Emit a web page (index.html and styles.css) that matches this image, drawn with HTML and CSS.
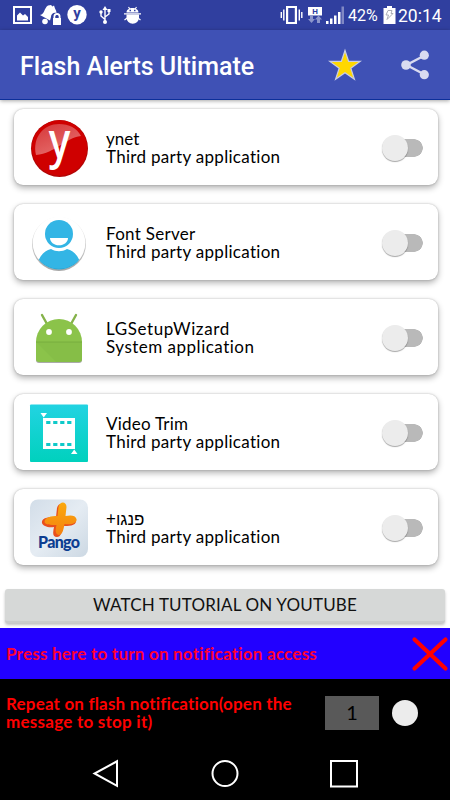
FILE: index.html
```html
<!DOCTYPE html>
<html lang="en">
<head>
    <meta charset="UTF-8">
    <title>Flash Alerts Ultimate</title>

    <link rel="stylesheet" href="styles.css">
</head>

<body>
<div class="phone">
    <div class="status-bar">
        <svg class="notifications" width="150" height="30" viewBox="0 0 150 30" fill="#fff">
            <path fill-rule="evenodd" d="M13 6h19v18H13zM15 8v14h15V8z"/>
            <path d="M17 20.500v-5l3-3 3 3 2-1.500 3 3v3.500z"/>
            <path d="M51 5l1.500 1.500L54 5.500l1 3c1 1.500 1.500 3 1.500 4.500-3-1-5.500 1-5.500 4l-1 3.500-10-5.500c5-1 4-7 8-9.500z"/>
            <circle cx="45" cy="21.500" r="2.800"/>
            <path fill-rule="evenodd" d="M53.500 18v-1.500a3.500 3.500 0 0 1 7 0V18h.5v7h-8v-7zm1.800 0h3.400v-1.500c0-2-3.400-2-3.400 0z"/>
            <circle cx="77" cy="14.700" r="9.700"/>
            <text class="status-y" x="77" y="18" text-anchor="middle">y</text>
            <g fill="none" stroke="#fff" stroke-width="1.400">
                <path d="M105 8v14M105 19.500l-4-3.500v-4M105 17l4-3v-3"/>
            </g>
            <path d="M102.500 10l2.500-4 2.500 4zM107.500 9h3v3h-3z"/>
            <circle cx="101" cy="12" r="1.700"/>
            <circle cx="105" cy="22" r="2"/>
            <path d="M126.500 12.500c0-6 12-6 12 0zM126.500 14.500h12.500v3a6.200 6.200 0 0 1-12.500 0z"/>
            <path d="M128.500 7l2 3M136.500 7l-2 3M124 13.800h17M124.500 20l4-3M140.500 20l-4-3" stroke="#fff" stroke-width="1.200"/>
            <path d="M129.500 10.500h1.500M134 10.500h1.500" stroke="#303f9f" stroke-width="1.300"/>
        </svg>
        <div class="system">
            <svg width="66" height="30" viewBox="0 0 66 30" fill="#fff">
                <path fill-rule="evenodd" d="M7 6h11v18H7zM9.200 8v14h6.600V8z"/>
                <path d="M4.800 9.500v11M20.300 9.500v11M2.300 12v6M22.800 12v6" stroke="#fff" stroke-width="1.400"/>
                <path d="M29 7h14v8.500H29z"/>
                <text class="status-h" x="36" y="14.200" text-anchor="middle">H</text>
                <path fill="#8c95cb" d="M31 15.500h3V19h2l-3.500 4-3.500-4h2zM39.500 15.500l3.500 4h-2V23h-3v-3.500h-2z"/>
                <path d="M47 21h2.500v3H47zM51 18.500h2.500V24H51zM55 15.500h2.500V24H55z"/>
                <path d="M59 12h2.500v12H59z"/>
                <path fill="#8088c4" d="M62.500 6.500H65V24h-2.500z"/>
            </svg>
            <span class="percent">42%</span>
            <svg class="battery" width="13" height="30" viewBox="0 0 13 30">
                <path fill="#fff" d="M.5 8H4V6h5v2h3.500v16H.5z"/>
                <path fill="none" stroke="#abaeb6" d="M5 10.500h4l-1 3h2l-6 6 1.500-4.500H3z"/>
            </svg>
            <span class="clock">20:14</span>
        </div>
    </div>

    <div class="toolbar">
        <h1>Flash Alerts Ultimate</h1>
        <svg class="star" width="34" height="32" viewBox="0 0 34 32">
            <path fill="#ffd800" stroke="#c9cde5" stroke-width="1.200" d="M17 1.500l3.600 10.800 11.600.1-9.400 6.900 3.600 10.900-9.400-6.500-9.400 6.500 3.600-10.900-9.400-6.900 11.600-.1z"/>
        </svg>
        <svg class="share" width="30" height="30" viewBox="0 0 30 30" fill="#d9dbf0">
            <path d="M24.500 5.500L6.500 15l18 9.500" fill="none" stroke="#d9dbf0" stroke-width="2.400"/>
            <circle cx="24.300" cy="5.200" r="4.600"/>
            <circle cx="6" cy="15" r="4.800"/>
            <circle cx="24.300" cy="24.700" r="4.600"/>
        </svg>
    </div>

    <div class="apps">
        <div class="card">
            <svg class="icon" viewBox="0 0 58 58">
                <defs>
                    <linearGradient id="gloss" x1="0" y1="0" x2=".6" y2="1">
                        <stop offset="0" stop-color="#d53638"/>
                        <stop offset="1" stop-color="#e66d6c"/>
                    </linearGradient>
                </defs>
                <circle cx="29.500" cy="29.500" r="28.500" fill="#b20606"/>
                <circle cx="29.500" cy="29" r="27.700" fill="#cf0000"/>
                <path fill="url(#gloss)" d="M6 36C2 18 14 5 29 5c10 0 18 4 22 12-16 2-25 17-45 19z"/>
                <text class="ynet-y" transform="translate(29.500 38.500) scale(.84 1)" text-anchor="middle">y</text>
            </svg>
            <div class="info">
                <div class="name">ynet</div>
                <div class="type third">Third party application</div>
            </div>
            <div class="switch"></div>
        </div>

        <div class="card">
            <svg class="icon" viewBox="0 0 58 58">
                <defs>
                    <clipPath id="face"><circle cx="29" cy="29.500" r="26"/></clipPath>
                    <linearGradient id="rim" x1="0" y1="0" x2="0" y2="1">
                        <stop offset="0" stop-color="#f5f5f5"/>
                        <stop offset="1" stop-color="#a5a5a5"/>
                    </linearGradient>
                </defs>
                <circle cx="29" cy="30" r="27" fill="url(#rim)"/>
                <circle cx="29" cy="29" r="26.300" fill="#fff"/>
                <g clip-path="url(#face)" fill="#33b5e5">
                    <circle cx="29" cy="20" r="14"/>
                    <path d="M7 52c2-10 7-15 14-17 5 3 11 3 16 0 7 2 12 7 14 17v7H7z"/>
                    <path fill="#16799e" d="M8 45c12 13 30 13 42 0v14H8z" opacity=".3"/>
                </g>
                <path fill="#fff" d="M20 24h18c0 4-4 7.300-9 7.300S20 28 20 24z"/>
            </svg>
            <div class="info">
                <div class="name font-server">Font Server</div>
                <div class="type third">Third party application</div>
            </div>
            <div class="switch"></div>
        </div>

        <div class="card">
            <svg class="icon" viewBox="0 0 58 58">
                <path d="M12 6l5 9M46 6l-5 9" stroke="#85b24a" stroke-width="2.400" stroke-linecap="round"/>
                <path fill="#aaa" d="M6 34h46v17a3 3 0 0 1-3 3H9a3 3 0 0 1-3-3z"/>
                <path fill="#8bc34a" d="M6 33a23 23 0 0 1 46 0v17a3 3 0 0 1-3 3H9a3 3 0 0 1-3-3z"/>
                <path fill="#7cb342" opacity=".3" d="M6 33h46v17a3 3 0 0 1-3 3H26z"/>
                <path d="M6 33h46" stroke="#75a83e" stroke-width=".8"/>
                <circle cx="19" cy="23" r="2.900" fill="#fff"/>
                <circle cx="39" cy="23" r="2.900" fill="#fff"/>
            </svg>
            <div class="info">
                <div class="name wizard">LGSetupWizard</div>
                <div class="type system-app">System application</div>
            </div>
            <div class="switch"></div>
        </div>

        <div class="card">
            <svg class="icon" viewBox="0 0 58 58">
                <defs>
                    <linearGradient id="trim" x1="0" y1="0" x2="0" y2="1">
                        <stop offset="0" stop-color="#22d3e2"/>
                        <stop offset="1" stop-color="#00d1bd"/>
                    </linearGradient>
                </defs>
                <rect y=".6" width="58" height="57.400" rx="1" fill="url(#trim)"/>
                <path fill="#fff" d="M13 14h32v31H13zM10.500 9h6.500L13.700 13.500zM41 50h6.500L44.200 45.500z"/>
                <path stroke="#0fc9c9" stroke-width="3" stroke-dasharray="4.200 2.800" d="M16.200 18.500h25.500M16.200 40.500h25.500"/>
            </svg>
            <div class="info">
                <div class="name video">Video Trim</div>
                <div class="type third">Third party application</div>
            </div>
            <div class="switch"></div>
        </div>

        <div class="card">
            <svg class="icon" viewBox="0 0 58 58">
                <defs>
                    <linearGradient id="sky" x1="0" y1="0" x2="1" y2="1">
                        <stop offset="0" stop-color="#d2dde8"/>
                        <stop offset=".5" stop-color="#e5ecf3"/>
                        <stop offset="1" stop-color="#ccd8e3"/>
                    </linearGradient>
                    <linearGradient id="plus" x1="0" y1="0" x2="0" y2="1">
                        <stop offset="0" stop-color="#fba90d"/>
                        <stop offset="1" stop-color="#f48211"/>
                    </linearGradient>
                </defs>
                <rect y=".5" width="58" height="57.500" rx="8" fill="url(#sky)"/>
                <path fill="#e94f1d" d="M27 9c1-5 8-6 8 0l-1 9c5-1 11-1 12 4 0 5-8 5-13 5-1 6-2 11-6 11-5 0-4-5-3-10-6 1-11-1-12-4-1-6 8-6 14-6z"/>
                <path fill="url(#plus)" d="M28.500 8c1-6 8-6 8 0l-1 9c5-1 10-1 11 3 1 5-7 6-12 5-1 6-2 11-6 11-4-1-3-6-2-10-6 0-11 0-12-3 0-5 7-6 13-6z"/>
                <text class="pango" x="29" y="49" text-anchor="middle" textLength="42">Pango</text>
            </svg>
            <div class="info">
                <div class="name hebrew"><span>+</span><bdi>פנגו</bdi></div>
                <div class="type third">Third party application</div>
            </div>
            <div class="switch"></div>
        </div>
    </div>

    <button class="tutorial">WATCH TUTORIAL ON YOUTUBE</button>

    <div class="access">
        <span>Press here to turn on notification access</span>
        <svg width="36" height="34" viewBox="0 0 36 34">
            <path d="M2.500 2.500l31 29M33.500 2.500l-31 29" stroke="#f00" stroke-width="4.200" stroke-linecap="round"/>
        </svg>
    </div>

    <div class="repeat">
        <p>Repeat on flash notification(open the<br><span class="line-two">message to stop it)</span></p>
        <div class="count">1</div>
        <div class="thumb"></div>
    </div>

    <div class="nav-bar">
        <svg width="26" height="30" viewBox="0 0 26 30"><path d="M24 2.300v24.500L1.500 14.500z"/></svg>
        <svg width="30" height="30" viewBox="0 0 30 30"><circle cx="15" cy="14.500" r="12.500"/></svg>
        <svg width="28" height="30" viewBox="0 0 28 30"><path d="M1 2h26v25.500H1z"/></svg>
    </div>
</div>
</body>

</html>
```

FILE: styles.css
```css
* {
    box-sizing: border-box;
}

body {
    margin: 0;
    font-family: Lato, "Noto Sans", sans-serif;
    font-size: 17px;
    color: #000;
}

svg {
    display: block;
    flex: none;
    overflow: visible;
}

.phone {
    width: 450px;
    height: 800px;
    display: flex;
    flex-direction: column;
    overflow: hidden;
    background: #fff;
}

.status-bar {
    height: 30px;
    flex: none;
    display: flex;
    justify-content: space-between;
    background: #303f9f;
    color: #fff;
    font-family: Roboto, sans-serif;
}
.status-bar .system {
    display: flex;
    width: 171px;
    line-height: 32px;
    white-space: nowrap;
}
.status-y {
    font: bold 15px Roboto, sans-serif;
    fill: #303f9f;
}
.status-h {
    font: bold 8px Roboto, sans-serif;
    fill: #303f9f;
}
.percent {
    width: 34px;
    margin-left: 3px;
    font-size: 16px;
}
.battery {
    margin-left: 1px;
}
.clock {
    margin-left: 2px;
    font-size: 17.5px;
}

.toolbar {
    height: 70px;
    flex: none;
    display: flex;
    align-items: center;
    padding: 0 20px;
    background: #3f51b5;
    color: #fff;
    border-bottom: 1px solid #0c2f9a;
    box-shadow: 0 1px 4px rgba(0, 0, 0, 0.35);
}
.toolbar h1 {
    flex: 1;
    margin: 0;
    padding-top: 3px;
    font-family: Roboto, sans-serif;
    font-size: 25px;
    font-weight: 500;
}
.toolbar .star {
    margin-right: 38px;
}

.apps {
    display: flex;
    flex-direction: column;
    gap: 19px;
    padding: 9px 12px 0 14px;
}
.card {
    height: 76px;
    display: flex;
    align-items: center;
    padding: 1px 15px 0 16px;
    border-radius: 9px;
    background: #fff;
    box-shadow: 0 3px 6px rgba(0, 0, 0, 0.3), 0 0 2px rgba(0, 0, 0, 0.25);
}
.card .icon {
    width: 58px;
    height: 58px;
}
.card .info {
    flex: 1;
    margin-left: 18px;
    line-height: 18px;
    white-space: nowrap;
}
.third {
    letter-spacing: 0.3px;
}
.font-server {
    letter-spacing: 0.28px;
}
.wizard {
    letter-spacing: 0.6px;
}
.system-app {
    letter-spacing: 0.5px;
}
.video {
    letter-spacing: 0.22px;
}

/* off state of the toggle */
.switch {
    width: 41px;
    height: 26px;
    display: flex;
    align-items: center;
    background: linear-gradient(#b9b9b9, #b9b9b9) 12px 4px / 20px 18px no-repeat, radial-gradient(circle at 32px 13px, #b9b9b9 8.5px, transparent 9px);
}
.switch:before {
    content: "";
    width: 26px;
    height: 26px;
    border-radius: 50%;
    background: #ececec;
    box-shadow: 0 1px 1px rgba(0, 0, 0, 0.35);
}

.hebrew {
    display: flex;
    font-family: Lato, "Liberation Sans", sans-serif;
}

.ynet-y {
    font: 600 48px "Open Sans", sans-serif;
    fill: #fff;
}
.pango {
    font: 900 16px Lato, sans-serif;
    fill: #0b3d91;
}

.tutorial {
    height: 34px;
    flex: none;
    margin: 24px 5px 5px;
    padding: 0 0 2px;
    border: 0;
    border-bottom: 2px solid #cacccb;
    border-radius: 3px;
    background: #d6d8d7;
    box-shadow: 0 2px 3px rgba(0, 0, 0, 0.25);
    font-family: Lato, sans-serif;
    font-size: 17px;
    letter-spacing: 0.17px;
    color: #111;
}

.access {
    height: 51px;
    flex: none;
    display: flex;
    align-items: center;
    justify-content: space-between;
    padding: 0 2px 0 6px;
    background: #20f;
    color: #ff0032;
    font-weight: bold;
    letter-spacing: 0.22px;
    white-space: nowrap;
}

.repeat {
    height: 69px;
    flex: none;
    display: flex;
    align-items: center;
    padding: 0 0 1px 6px;
    background: #000;
    color: #f00;
    font-weight: bold;
}
.repeat p {
    width: 319px;
    margin: 0;
    line-height: 18px;
    letter-spacing: 0.18px;
    white-space: nowrap;
}
.repeat .line-two {
    letter-spacing: 0.25px;
}
.repeat .count {
    width: 54px;
    height: 34px;
    line-height: 33px;
    text-align: center;
    background: #595959;
    color: #000;
    font-size: 20px;
    font-weight: normal;
}
.repeat .thumb {
    width: 26px;
    height: 26px;
    margin-left: 13px;
    border-radius: 50%;
    background: #ececec;
}

.nav-bar {
    flex: 1;
    display: flex;
    align-items: center;
    justify-content: space-between;
    padding: 0 92px 0 93px;
    background: #000;
}
.nav-bar svg {
    fill: none;
    stroke: #fff;
    stroke-width: 2;
}
```
